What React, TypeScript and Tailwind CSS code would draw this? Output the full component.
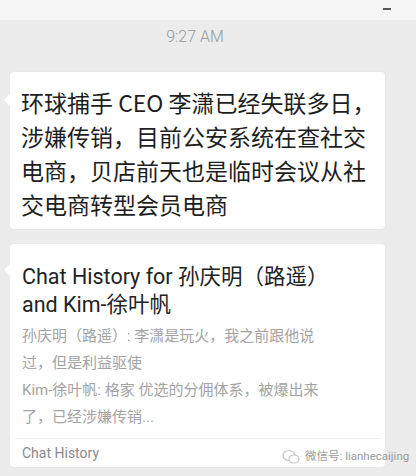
import React from 'react';

const cjk = { fontFamily: '"Noto Sans CJK SC", "Noto Sans", sans-serif' };
const latin = { fontFamily: 'Roboto, "Noto Sans CJK SC", sans-serif' };

const Tail: React.FC<{ top: string }> = ({ top }) => (
  <span
    className={`absolute -left-[6px] ${top} w-0 h-0 border-y-[6px] border-y-transparent border-r-[6px] border-r-white`}
  />
);

const mainLines = [
  '环球捕手 CEO 李潇已经失联多日，',
  '涉嫌传销，目前公安系统在查社交',
  '电商，贝店前天也是临时会议从社',
  '交电商转型会员电商',
];

const previewLines = [
  '孙庆明（路遥）: 李潇是玩火，我之前跟他说',
  '过，但是利益驱使',
  'Kim-徐叶帆: 格家 优选的分佣体系，被爆出来',
  '了，已经涉嫌传销...',
];

const App: React.FC = () => {
  return (
    <div className="relative w-[416px] h-[476px] overflow-hidden bg-[#ececec] flex flex-col" style={cjk}>
      {/* top strip */}
      <div className="h-[20px] bg-[#f6f6f6] flex justify-end items-start pr-[25px] pt-[8px]">
        <span className="block w-[8px] h-[2px] bg-[#555]" />
      </div>

      <div className="flex justify-center pt-[5px] h-[52px]">
        <span className="text-[16px] text-[#9a9a9a] ml-[-26px] font-light" style={latin}>9:27 AM</span>
      </div>

      <div className="flex flex-col gap-[15px] pl-[10px] pr-[31px]">
        {/* message bubble */}
        <div className="relative bg-white rounded-[3px] px-[11px] pt-[13px] pb-[8px] shadow-[0_0_1px_rgba(0,0,0,0.15)]">
          <Tail top="top-[22px]" />
          {mainLines.map((l) => (
            <p key={l} className="text-[23px] leading-[34px] text-[#1e1e1e] whitespace-nowrap">
              {l}
            </p>
          ))}
        </div>

        {/* chat history card */}
        <div className="relative bg-white rounded-[3px] shadow-[0_0_1px_rgba(0,0,0,0.15)]">
          <Tail top="top-[20px]" />
          <div className="px-[12px] pt-[19px] pb-[7px]">
            <p className="text-[21.5px] leading-[28px] text-[#222] whitespace-nowrap" style={latin}>
              Chat History for 孙庆明（路遥）
            </p>
            <p className="text-[21.5px] leading-[28px] text-[#222] whitespace-nowrap" style={latin}>
              and Kim-徐叶帆
            </p>
            <div className="mt-[4px] text-[15px] leading-[27px] text-[#a3a3a3]" style={latin}>
              {previewLines.map((l) => (
                <p key={l} className="whitespace-nowrap">{l}</p>
              ))}
            </div>
          </div>
          <div className="mx-[5px] border-t border-[#ececec]" />
          <div className="px-[12px] h-[28px] flex items-center">
            <span className="text-[14px] text-[#8a8a8a]" style={latin}>Chat History</span>
          </div>
        </div>
      </div>

      {/* watermark */}
      <div className="absolute left-[282px] top-[448px] flex items-center gap-[5px] text-[#9a9a9a] whitespace-nowrap">
        <svg width="18" height="16" viewBox="0 0 18 16" fill="none" stroke="#c4c4c4" strokeWidth="1.2">
          <ellipse cx="7" cy="6.5" rx="6" ry="5" />
          <ellipse cx="12" cy="10" rx="5" ry="4" fill="white" />
        </svg>
        <span className="text-[11.5px]" style={latin}>微信号: lianhecaijing</span>
      </div>
    </div>
  );
};

export default App;
